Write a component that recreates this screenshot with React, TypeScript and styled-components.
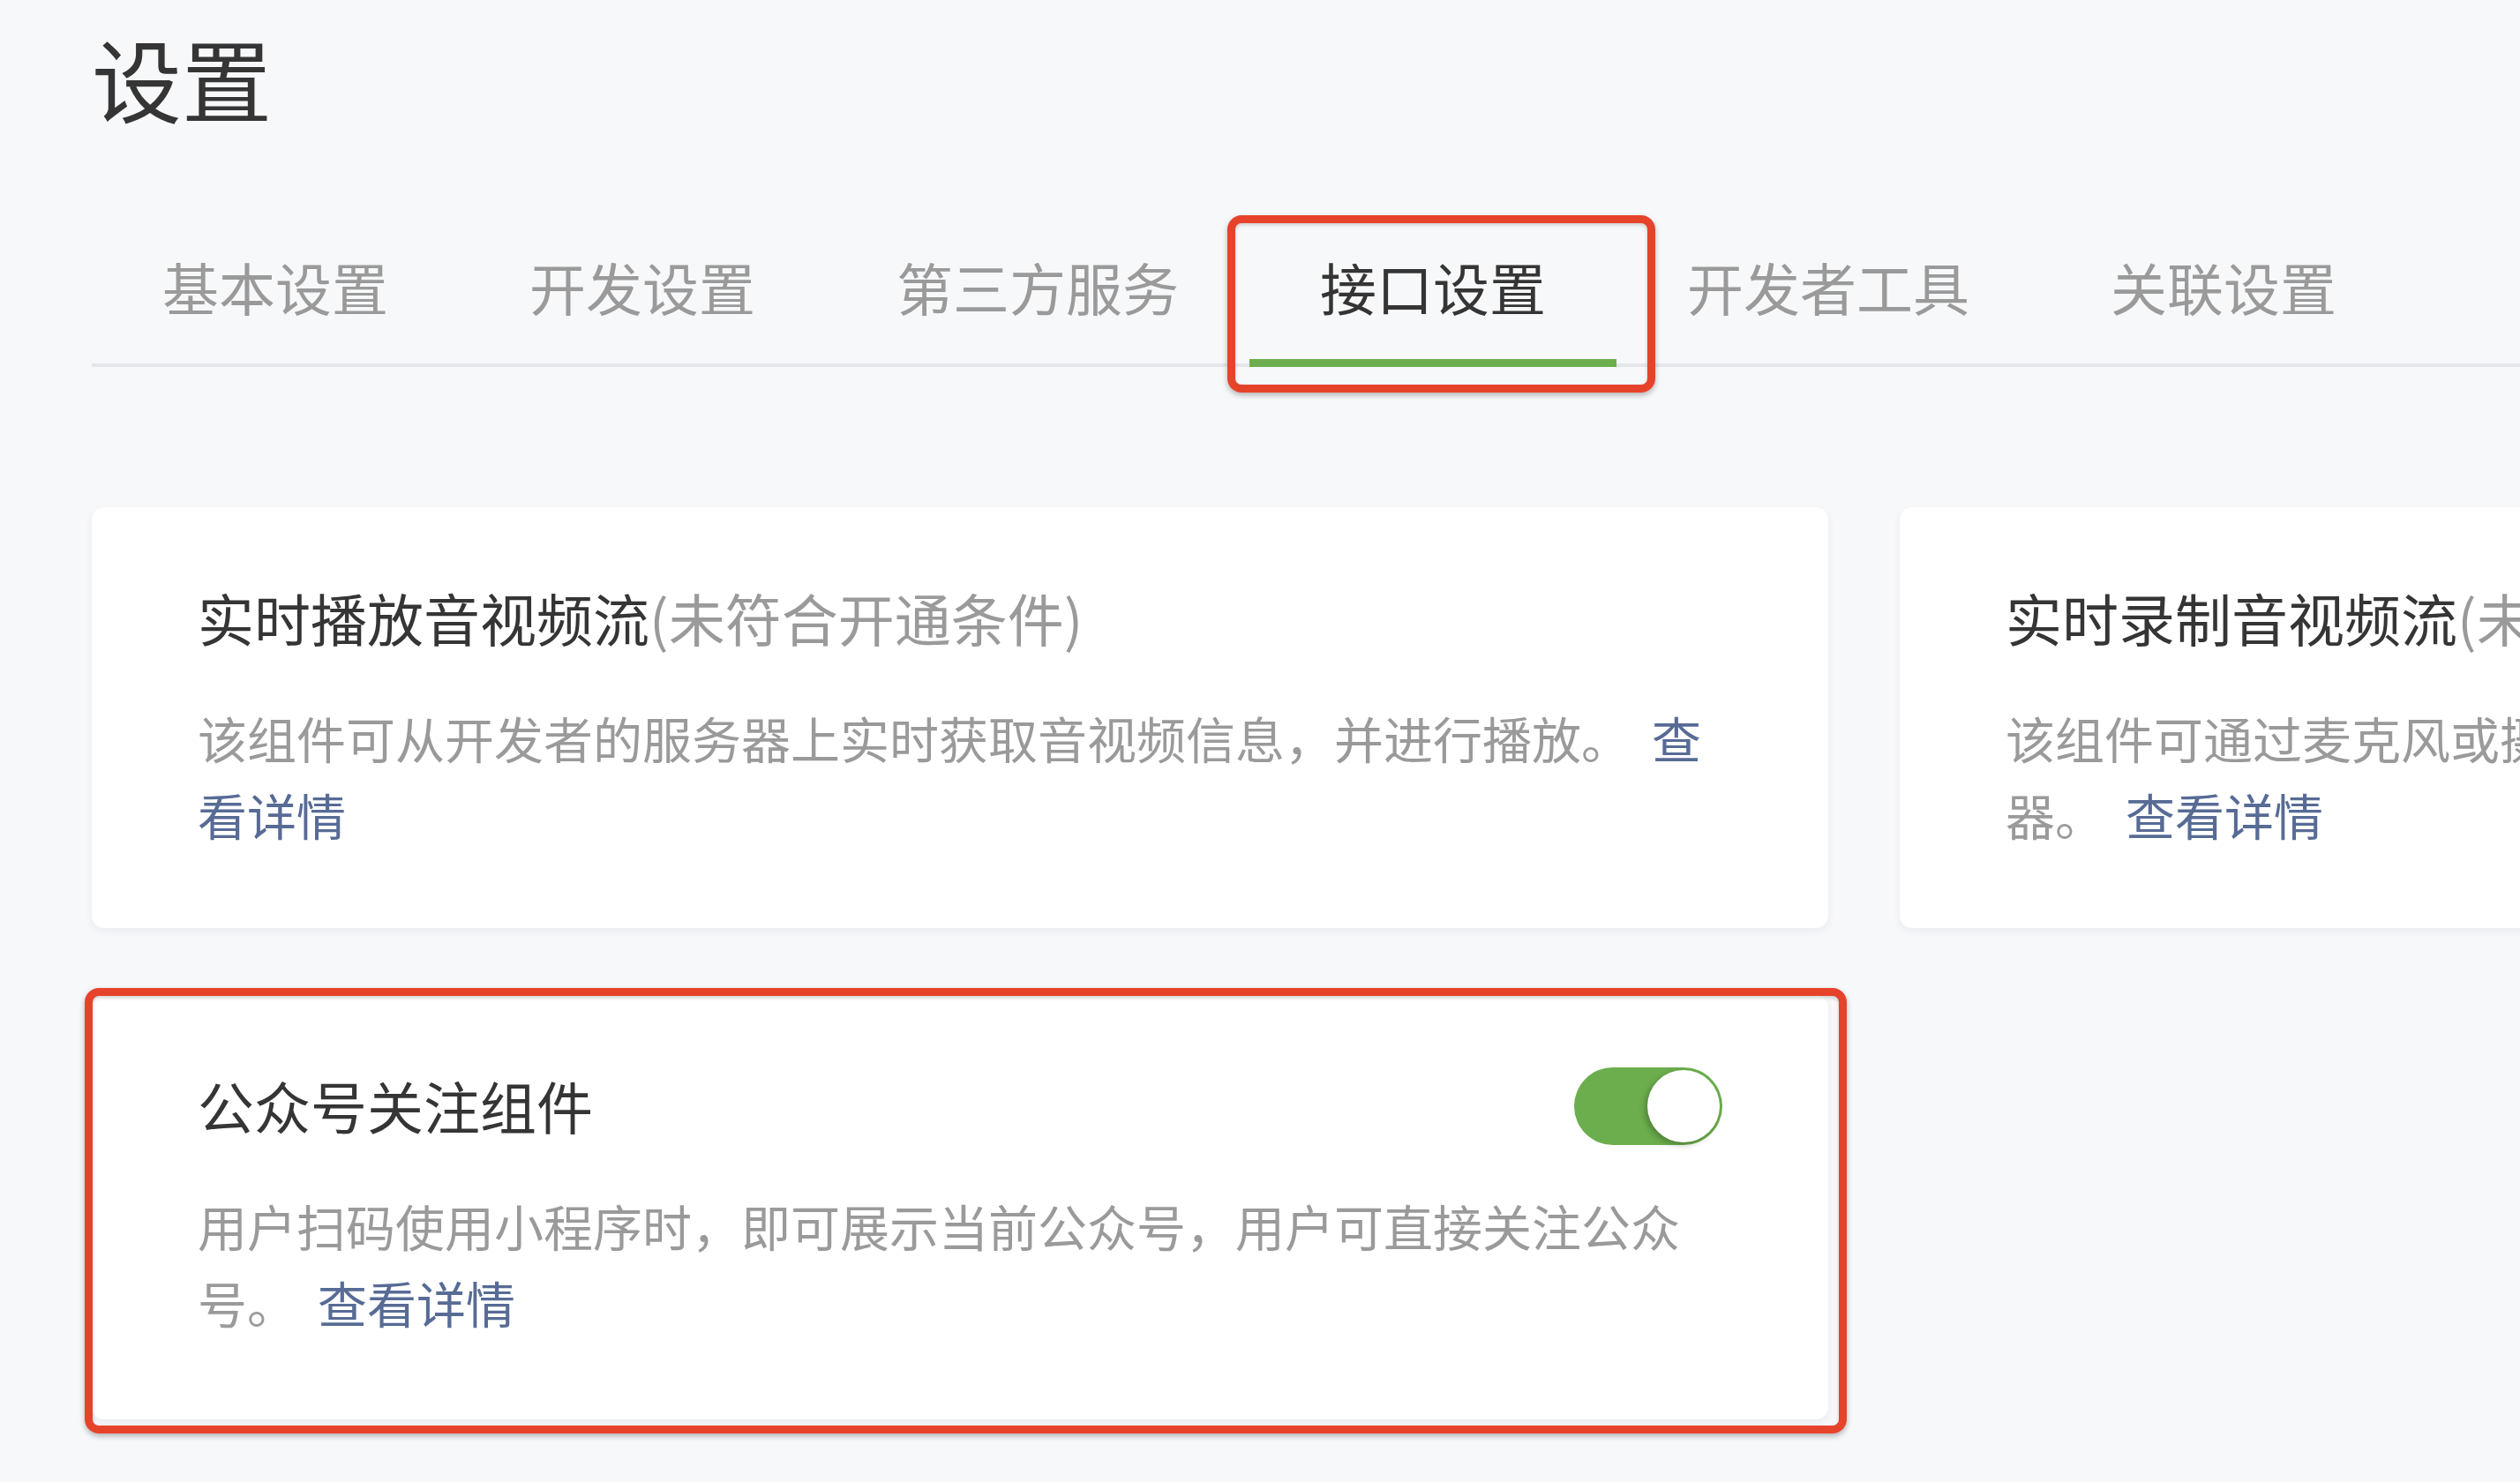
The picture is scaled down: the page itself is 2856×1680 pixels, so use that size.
import React from "react";
import styled, { createGlobalStyle, css } from "styled-components";

const GlobalStyle = createGlobalStyle`
  html, body {
    margin: 0;
    padding: 0;
    overflow: hidden;
    background: #f7f8fa;
  }
  body {
    font-family: "Noto Sans CJK SC", "Noto Sans", sans-serif;
    color: #353535;
  }
`;

const Page = styled.div`
  width: 2856px;
  height: 1680px;
  box-sizing: border-box;
  padding: 27px 0 0 104px;
  overflow: hidden;
`;

const Heading = styled.h1`
  margin: 0;
  font-size: 102px;
  line-height: 122px;
  font-weight: 400;
  color: #353535;
`;

const TabBar = styled.nav`
  margin-top: 130px;
  display: flex;
  border-bottom: 4px solid #e5e6ea;
`;

const annotation = css`
  &::after {
    content: "";
    position: absolute;
    border: 9px solid #e6432b;
    border-radius: 16px;
    box-shadow: 0 3px 6px rgba(0, 0, 0, 0.28), inset 0 2px 4px rgba(0, 0, 0, 0.18);
    pointer-events: none;
  }
`;

const Tab = styled.div<{ $active?: boolean }>`
  position: relative;
  padding: 0 80px 43px;
  font-size: 64px;
  line-height: 90px;
  color: ${(p) => (p.$active ? "#353535" : "#9a9a9a")};
  white-space: nowrap;

  ${(p) =>
    p.$active &&
    css`
      &::before {
        content: "";
        position: absolute;
        left: 0;
        right: 0;
        bottom: -4px;
        height: 9px;
        background: #6cae4d;
      }
      ${annotation}
      &::after {
        top: -35px;
        left: -25px;
        right: -44px;
        bottom: -33px;
      }
    `}
`;

const CardGrid = styled.section`
  margin-top: 159px;
  display: grid;
  grid-template-columns: repeat(2, 1968px);
  column-gap: 81px;
  row-gap: 76px;
`;

const Card = styled.article<{ $marked?: boolean }>`
  position: relative;
  box-sizing: border-box;
  background: #ffffff;
  border-radius: 14px;
  padding: 79px 120px 86px;
  box-shadow: 0 4px 10px rgba(20, 30, 60, 0.06);

  ${(p) =>
    p.$marked &&
    css`
      padding-bottom: 90px;
      ${annotation}
      &::after {
        top: -8px;
        left: -8px;
        right: -21px;
        bottom: -16px;
      }
    `}
`;

const TitleRow = styled.div`
  display: flex;
  align-items: center;
  justify-content: space-between;
  height: 90px;
`;

const Title = styled.h2`
  margin: 0;
  font-size: 64px;
  line-height: 90px;
  font-weight: 400;
  color: #353535;
  white-space: nowrap;
`;

const Note = styled.span`
  color: #9a9a9a;
`;

const Desc = styled.p`
  margin: 48px 0 0;
  font-size: 56px;
  line-height: 87px;
  color: #9a9a9a;
`;

const Link = styled.a`
  margin-left: 24px;
  color: #576b95;
  text-decoration: none;
  cursor: pointer;
`;

const Switch = styled.span<{ $on?: boolean }>`
  position: relative;
  flex: none;
  width: 168px;
  height: 88px;
  margin-top: 4px;
  border-radius: 44px;
  background: ${(p) => (p.$on ? "#6cae4d" : "#e5e5e5")};

  &::after {
    content: "";
    position: absolute;
    top: 3px;
    ${(p) => (p.$on ? "right: 3px;" : "left: 3px;")}
    width: 82px;
    height: 82px;
    border-radius: 50%;
    background: #ffffff;
    box-shadow: -3px 3px 7px rgba(0, 0, 0, 0.25);
  }
`;

const tabs = ["基本设置", "开发设置", "第三方服务", "接口设置", "开发者工具", "关联设置"];

type CardData = {
  title: string;
  note?: string;
  desc: string;
  toggle?: boolean;
  marked?: boolean;
};

const cards: CardData[] = [
  {
    title: "实时播放音视频流",
    note: "(未符合开通条件)",
    desc: "该组件可从开发者的服务器上实时获取音视频信息，并进行播放。",
  },
  {
    title: "实时录制音视频流",
    note: "(未符合开通条件)",
    desc: "该组件可通过麦克风或摄像头实时录制音视频，并上传到开发者服务器。",
  },
  {
    title: "公众号关注组件",
    desc: "用户扫码使用小程序时，即可展示当前公众号，用户可直接关注公众号。",
    toggle: true,
    marked: true,
  },
];

export default function App() {
  return (
    <>
      <GlobalStyle />
      <Page>
        <Heading>设置</Heading>
        <TabBar>
          {tabs.map((t) => (
            <Tab key={t} $active={t === "接口设置"}>
              {t}
            </Tab>
          ))}
        </TabBar>
        <CardGrid>
          {cards.map((c) => (
            <Card key={c.title} $marked={c.marked}>
              <TitleRow>
                <Title>
                  {c.title}
                  {c.note && <Note>{c.note}</Note>}
                </Title>
                {c.toggle && <Switch $on />}
              </TitleRow>
              <Desc>
                {c.desc}
                <Link>查看详情</Link>
              </Desc>
            </Card>
          ))}
        </CardGrid>
      </Page>
    </>
  );
}
